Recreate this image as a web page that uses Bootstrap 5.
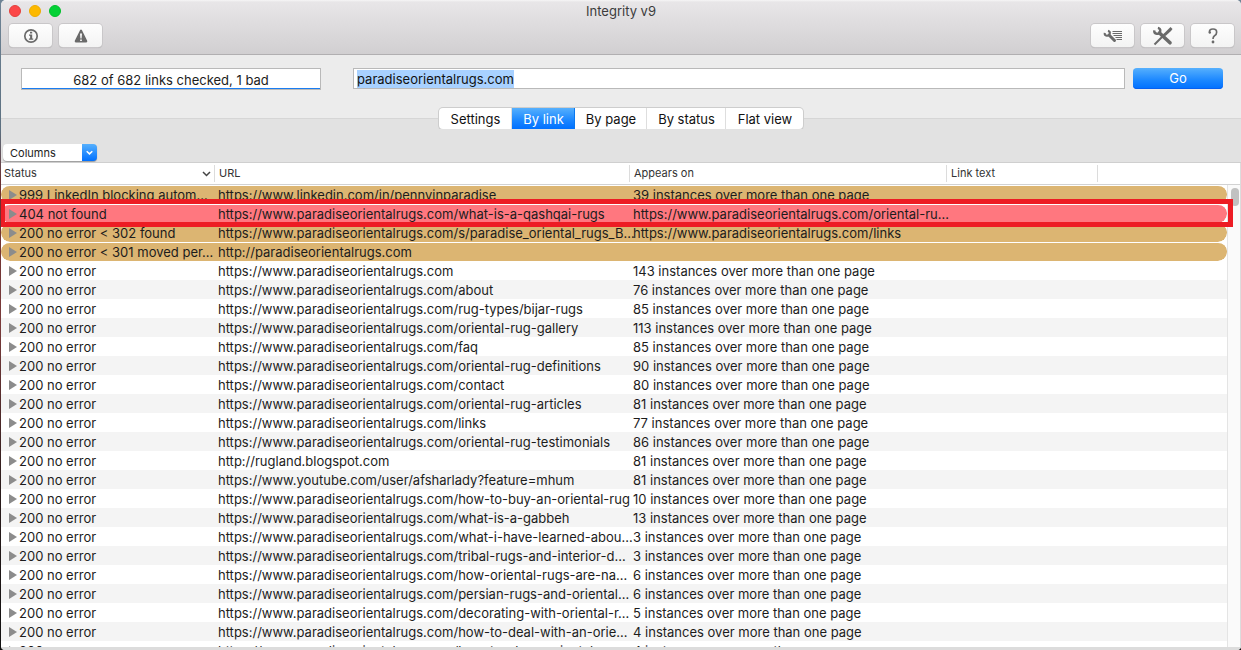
<!DOCTYPE html>
<html lang="en">
<head>
<meta charset="utf-8">
<meta name="viewport" content="width=device-width, initial-scale=1">
<title>Integrity v9</title>
<link href="https://cdn.jsdelivr.net/npm/bootstrap@5.3.0/dist/css/bootstrap.min.css" rel="stylesheet">
<style>
body{font-family:Inter,"Liberation Sans",sans-serif;font-size:13px;line-height:19px;color:#1c1c1c;background:linear-gradient(#6f8496,#5c7080 20%,#6b3030 28%,#7a3b3b 50%,#2b1c1c 75%,#111)}
.app-window{margin-left:1px;height:100vh;background:#ececec;border-radius:5px 5px 4px 4px}
.title-bar{background:linear-gradient(#f6f5f6 0,#e8e6e8 2px,#d1cfd1);border-bottom:1px solid #b1afb1;height:55px}
.window-title{line-height:22px;color:#3c3c3c;height:24px}
.lights{left:8px;top:5px}
.light{width:12px;height:12px;border-radius:50%;padding:0;border:1px solid #e2403c}
.tools{gap:7px;padding:0 7px 0 8px}
.tools svg{display:block;margin:auto}
.tool{width:43px;height:23px;border:0;border-radius:4px;padding:0;background:linear-gradient(#fefefe,#f3f3f3);box-shadow:0 0 0 1px #c9c7c9,0 1px 1px #a9a7a9;color:#6a6a6a}
.address{padding:13px 18px 19px 20px}
.field{height:21px;border:1px solid #b9b9b9;background:#fff}
.progress-field{width:300px;flex-shrink:0;line-height:22px;border-bottom:0;box-shadow:inset 0 -1px #1a7cf0,0 1px #b9b9b9}
.url-field{margin:0 8px 0 32px}
.field input{height:19px;border:0;outline:0;padding:2px 3px 0;background:transparent;color:#111}
.field input::selection{background:#a8d1ff;color:#111}
.blue{background:linear-gradient(#56b0fd,#1a86ff 60%,#0070ff);color:#fff}
.go{width:90px;height:21px;border:0;border-radius:4px;padding:0;box-shadow:inset 0 -1px #0860f0}
.tab-strip{background:linear-gradient(#ececec 10px,#d6d6d6 10px,#d6d6d6 11px,#e2e2e2 11px)}
.segments{height:21px;border-radius:4px;background:#fff;box-shadow:0 0 0 1px #cdcdcd,0 1px 1px #a5a5a5}
.segments button{border:0;padding:0 0 0 1px;line-height:20px;background:transparent;color:#111;border-right:1px solid #dedede}
.segments button:last-child{border-right:0}
.segments button.blue{background:linear-gradient(#56b0fd,#1a86ff 60%,#0070ff);color:#fff;border-color:#0a78f0}
.lower{background:#e2e2e2;padding:15px 2px 1px}
.columns-menu{appearance:none;width:94px;height:17px;border:0;border-radius:4px;padding:0 20px 0 7px;font-size:11px;line-height:16px;color:#222;box-shadow:0 1px 1px #9c9c9c;
background:url("data:image/svg+xml,%3Csvg xmlns='http://www.w3.org/2000/svg' width='15' height='17'%3E%3Cpath d='M4.7 7.3l2.8 2.6 2.8-2.6' fill='none' stroke='%23fff' stroke-width='1.5'/%3E%3C/svg%3E") right top/15px 17px no-repeat,linear-gradient(#56b0fd,#0070ff) right top/15px 17px no-repeat,#fff}
.sheet{border-top:1px solid #cfcfcf;background:#fff;min-height:0}
.links{table-layout:fixed;border-collapse:separate;border-spacing:0;width:100%}
.links th{height:22px;padding:0 4px 0 3px;font-size:11px;font-weight:400;line-height:21px;color:#333;border-bottom:1px solid #d2d2d2;background:linear-gradient(#dcdcdc,#dcdcdc) right 2px/1px 17px no-repeat}
.links th+th{padding-left:4px}
.links th:last-child{background:none}
.links td{height:19px;padding:0 0 0 3px;white-space:nowrap;line-height:18px;border-top:1px solid transparent}
.links td:first-child{padding-left:8px}
.links tr:nth-child(even) td{background:#f4f4f4}
.links tr.tan td,.links tr.bad td{background:#dcb572;background-clip:padding-box}
.links tr.bad td{background:#ff777f;background-clip:padding-box}
.links tr.tan td:first-child,.links tr.bad td:first-child{border-radius:9px 0 0 9px}
.links tr.tan td:last-child,.links tr.bad td:last-child{border-radius:0 9px 9px 0}
.twist{width:10px;height:10px;border:0;padding:0;background:transparent;line-height:0;vertical-align:0}
.twist::before{content:"";display:block;border-left:8px solid #8c8c8c;border-top:5px solid transparent;border-bottom:5px solid transparent;width:0}
.rail{width:14px;border-right:1px solid #dcdcdc}
.rail-head{height:22px;border-bottom:1px solid #d2d2d2}
.rail-body{background:#fafafa;border-left:1px solid #e4e4e4;padding:3px 1px 0 3px}
.thumb{height:18px;border-radius:4px;background:#c1c1c1}
.marker{left:-1px;right:8px;top:36px;height:28px;border:5px solid #ed1c24;pointer-events:none}
.foot{height:3px;background:#dcdcdc;border-radius:0 0 4px 4px}
</style>
</head>
<body>
<div class="app-window d-flex flex-column overflow-hidden">
  <header class="title-bar position-relative flex-shrink-0">
    <div class="lights position-absolute d-flex gap-2">
      <button class="light" aria-label="Close" style="background:#fc4748"></button>
      <button class="light" aria-label="Minimise" style="background:#fdb900;border-color:#eeab00"></button>
      <button class="light" aria-label="Zoom" style="background:#04d136;border-color:#00bf2b"></button>
    </div>
    <div class="window-title text-center">Integrity v9</div>
    <div class="d-flex tools">
      <button class="tool" aria-label="Info"><svg width="16" height="16" viewBox="0 0 16 16"><circle cx="8" cy="8" r="6.200" fill="none" stroke="currentColor" stroke-width="1.700"/><path d="M6 6.500h3.200v4h1v1.200H5.900v-1.200h1.200v-2.800H6zM7 3.700h2.200v1.800H7z" fill="currentColor"/></svg></button>
      <button class="tool" aria-label="Warnings"><svg width="16" height="16" viewBox="0 0 16 16"><path fill-rule="evenodd" d="M8 1.500q.6 0 1 .8l5.200 10.500q.5 1.700-1 1.700H2.800q-1.500 0-1-1.700L7 2.300q.4-.8 1-.8zM7 5.500l.4 5h1.200l.4-5zM7.100 11.500v1.600h1.800v-1.600z" fill="currentColor"/></svg></button>
      <button class="tool ms-auto" aria-label="Link settings"><svg width="20" height="14" viewBox="0 0 20 14"><path d="M6 6l5.500 5.500" stroke="currentColor" stroke-width="3" stroke-linecap="round"/><path d="M1.700 3.800A2.600 2.600 0 1 0 5 1.700" fill="none" stroke="currentColor" stroke-width="2"/><path d="M9.500 2.500H19M9.500 4.500H19M10.500 6.500H19M12.500 8.500H19M13.500 10.500H19" stroke="currentColor" stroke-width="1"/></svg></button>
      <button class="tool" aria-label="Tools"><svg width="22" height="20" viewBox="0 0 22 20"><path d="M7.500 7l10.500 9.800" stroke="currentColor" stroke-width="3.600" stroke-linecap="round"/><path d="M2.300 4.400A3 3 0 1 0 5.900 1.900" fill="none" stroke="currentColor" stroke-width="2.400"/><path d="M11.500 8L17 2.500 18.500 1.100l2 2L19 4.900l-5.500 5z" fill="currentColor"/><path d="M13 8l-8.500 8.500-2 2" stroke="currentColor" stroke-width="2" fill="none"/></svg></button>
      <button class="tool" aria-label="Help"><svg width="12" height="18" viewBox="0 0 12 18"><path d="M2.500 5.500Q2 2 6 2t3.600 3.400Q9.600 7.500 7.500 8.700 6 9.800 6 12" fill="none" stroke="currentColor" stroke-width="1.700"/><circle cx="2.800" cy="5.500" r="1.200" fill="currentColor"/><circle cx="6" cy="15" r="1.400" fill="currentColor"/></svg></button>
    </div>
  </header>
  <div class="address d-flex flex-shrink-0">
    <output class="field progress-field d-block text-center">682 of 682 links checked, 1 bad</output>
    <div class="field url-field flex-grow-1 d-flex"><input id="site" class="w-100" type="text" value="paradiseorientalrugs.com" aria-label="Starting URL"></div>
    <button class="go blue">Go</button>
  </div>
  <nav class="tab-strip d-flex justify-content-center flex-shrink-0" aria-label="Views">
    <div class="segments d-flex">
      <button style="width:73px">Settings</button><button class="blue" style="width:63px">By link</button><button style="width:72px">By page</button><button style="width:79px">By status</button><button style="width:77px">Flat view</button>
    </div>
  </nav>
  <div class="lower flex-shrink-0">
    <select class="columns-menu d-block" aria-label="Columns"><option>Columns</option></select>
  </div>
  <main class="sheet d-flex flex-grow-1 position-relative">
    <div class="flex-grow-1 overflow-hidden">
      <table class="links">
        <colgroup><col style="width:214px"><col style="width:415px"><col style="width:317px"><col style="width:151px"><col></colgroup>
        <thead><tr><th><span class="d-flex justify-content-between align-items-center">Status<svg width="9" height="6" viewBox="0 0 9 6"><path d="M1 1l3.500 3.500L8 1" fill="none" stroke="#444" stroke-width="1.500"/></svg></span></th><th>URL</th><th>Appears on</th><th>Link text</th><th></th></tr></thead>
        <tbody id="rows"></tbody>
      </table>
    </div>
    <div class="rail d-flex flex-column flex-shrink-0"><div class="rail-head"></div><div class="rail-body flex-grow-1"><div class="thumb"></div></div></div>
    <div class="marker position-absolute"></div>
  </main>
  <div class="foot flex-shrink-0"></div>
</div>
<script>
const site = 'https://www.paradiseorientalrugs.com';
const many = n => n + ' instances over more than one page';
const data = [
  ['999 LinkedIn blocking autom…', 'https://www.linkedin.com/in/pennyinparadise', many(39), 'tan'],
  ['404 not found', site + '/what-is-a-qashqai-rugs', site + '/oriental-ru…', 'bad'],
  ['200 no error < 302 found', site + '/s/paradise_oriental_rugs_B…', site + '/links', 'tan'],
  ['200 no error < 301 moved per…', 'http://paradiseorientalrugs.com', '', 'tan'],
  ...[
    [site, 143], [site + '/about', 76], [site + '/rug-types/bijar-rugs', 85], [site + '/oriental-rug-gallery', 113],
    [site + '/faq', 85], [site + '/oriental-rug-definitions', 90], [site + '/contact', 80], [site + '/oriental-rug-articles', 81],
    [site + '/links', 77], [site + '/oriental-rug-testimonials', 86], ['http://rugland.blogspot.com', 81],
    ['https://www.youtube.com/user/afsharlady?feature=mhum', 81], [site + '/how-to-buy-an-oriental-rug', 10],
    [site + '/what-is-a-gabbeh', 13], [site + '/what-i-have-learned-abou…', 3], [site + '/tribal-rugs-and-interior-d…', 3],
    [site + '/how-oriental-rugs-are-na…', 6], [site + '/persian-rugs-and-oriental…', 6],
    [site + '/decorating-with-oriental-r…', 5], [site + '/how-to-deal-with-an-orie…', 4], [site + '/how-to-clean-oriental-rugs', 4]
  ].map(([url, n]) => ['200 no error', url, many(n), ''])
];
const body = document.getElementById('rows');
for (const [status, url, on, kind] of data) {
  const tr = body.insertRow();
  if (kind) tr.className = kind;
  const first = tr.insertCell();
  const twist = document.createElement('button');
  twist.className = 'twist';
  twist.setAttribute('aria-label', 'Expand');
  first.append(twist, status);
  for (const text of [url, on, '', '']) tr.insertCell().textContent = text;
}
const field = document.getElementById('site');
field.focus();
field.select();
</script>
<script src="https://cdn.jsdelivr.net/npm/bootstrap@5.3.0/dist/js/bootstrap.bundle.min.js"></script>
</body>
</html>
